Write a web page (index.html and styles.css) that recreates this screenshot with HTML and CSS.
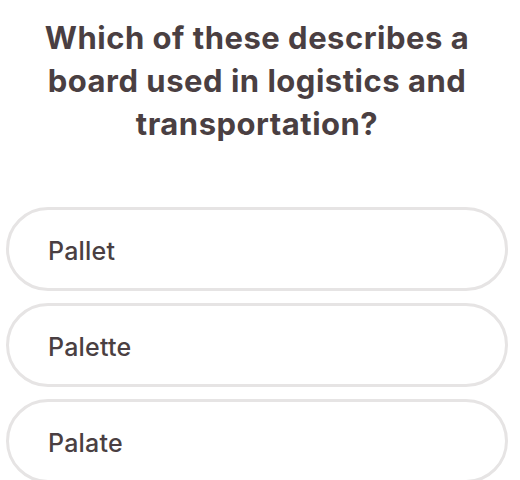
FILE: index.html
```html
<!DOCTYPE html>
<html>
<head>
<meta charset="utf-8">
<link rel="stylesheet" href="styles.css">
</head>
<body>
<main class="quiz">
  <h1 class="question">Which of these describes a board used in logistics and transportation?</h1>
  <ul class="options">
    <li class="option">Pallet</li>
    <li class="option">Palette</li>
    <li class="option">Palate</li>
  </ul>
</main>
</body>
</html>
```
FILE: styles.css
```css
html, body {
  margin: 0;
  padding: 0;
  background: #ffffff;
}
body {
  font-family: Inter, "Noto Sans", sans-serif;
  color: #4a3f42;
}
.quiz {
  padding: 16px 6px 0 6px;
  width: 502px;
}
.question {
  margin: 0 auto;
  width: 460px;
  font-size: 31px;
  font-weight: 700;
  line-height: 43px;
  text-align: center;
  letter-spacing: 0.5px;
}
.options {
  list-style: none;
  margin: 62px 0 0 0;
  padding: 0;
  display: flex;
  flex-direction: column;
  gap: 12px;
}
.option {
  box-sizing: border-box;
  height: 84px;
  border: 3px solid #e6e4e4;
  border-radius: 42px;
  padding: 3px 0 0 39px;
  display: flex;
  align-items: center;
  font-size: 25px;
  font-weight: 500;
  letter-spacing: 0.2px;
}
```
